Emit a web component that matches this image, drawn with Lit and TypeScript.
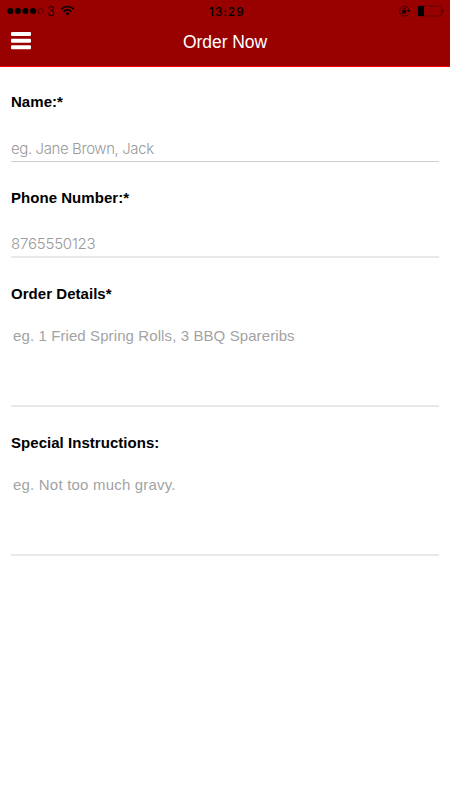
import { LitElement, html, css } from "lit";
import { customElement } from "lit/decorators.js";

@customElement("app-root")
export class AppRoot extends LitElement {
  static styles = css`
    :host { display: block; height: 800px; background: #fff; overflow: hidden; color: #000; font-family: "Liberation Sans", Arial, sans-serif; }
    header { height: 66px; background: #990000; border-bottom: 1px solid #fe0000; }
    .status { height: 22px; display: grid; grid-template-columns: 1fr auto 1fr; }
    .status svg { display: block; }
    .carrier { display: flex; }
    .three { font: 300 12.5px/23px "Inter", sans-serif; width: 13px; padding-left: 1px; }
    .time { font: 500 12px/23px "Inter", sans-serif; letter-spacing: 0.9px; width: 36px; padding-left: 4px; white-space: nowrap; }
    .right { display: flex; justify-content: flex-end; }
    .bar { height: 44px; display: grid; grid-template-columns: 1fr auto 1fr; }
    .menu { width: 20px; margin: 10px 0 0 11px; }
    .title { font-size: 17.5px; line-height: 40px; color: #fff; letter-spacing: -0.05px; }
    form { padding: 0 11px; }
    .field { display: flex; flex-direction: column; white-space: nowrap; box-sizing: border-box; border-bottom: 1px solid #cdcdcd; }
    .soft { border-bottom: 2px solid #e8e8e8; }
    label { font-weight: 700; font-size: 15px; line-height: 20px; padding-top: 26px; letter-spacing: 0.04px; }
    .f1 label { padding-top: 25px; }
    .input { font: 300 15px/20px "Inter", sans-serif; color: #9a9a9a; padding-top: 26px; }
    .f1 .input { padding-top: 27px; }
    .area { font-size: 15px; line-height: 20px; color: #a3a3a3; padding: 22px 0 0 2px; letter-spacing: 0.1px; }
    .f1 { height: 95px; } .f2 { height: 96px; } .f3 { height: 149px; } .f4 { height: 149px; }
    .f4 .area { letter-spacing: 0.2px; }
    .t1 { letter-spacing: -0.4px; } .t2 { letter-spacing: -0.2px; }
  `;

  render() {
    return html`
      <header>
        <div class="status">
          <div class="carrier">
            <svg width="46" height="22"><g fill="#000"><circle cx="10.3" cy="11" r="3"/><circle cx="17.9" cy="11" r="3"/><circle cx="25.4" cy="11" r="3"/><circle cx="33" cy="11" r="3"/></g><circle cx="40.7" cy="11" r="2.6" fill="none" stroke="#250000" stroke-width=".6"/></svg>
            <span class="three">3</span>
            <svg width="16" height="22" fill="none" stroke="#000" stroke-width="1.6"><path d="M1.3 9.1Q7.5 3.9 13.7 9.1M3.7 11.6Q7.5 8.3 11.3 11.6"/><path d="M5.4 13.4Q7.5 11.8 9.6 13.4L7.5 15.5Z" fill="#000" stroke="none"/></svg>
          </div>
          <span class="time">13:29</span>
          <div class="right">
            <svg width="54" height="22"><g fill="none" stroke="#300000"><path stroke-width=".9" d="M12.2 14.4A4.9 4.9 0 1 1 12.9 9"/><path d="M6.9 10.5V9.6a1.3 1.3 0 0 1 2.6 0v.9"/></g><path d="M6.3 10.2h3.8v3.4H6.3zM11 10h3.8l-1.8 2.4z" fill="#100000"/><rect x="22" y="6" width="23.5" height="10" rx="1.5" fill="none" stroke="#680000"/><path d="M22 6h6v10h-6z" fill="#000"/><path d="M46.5 9.7q1.5 1.5 0 3.4z" fill="#300000" stroke="#500000"/></svg>
          </div>
        </div>
        <div class="bar">
          <svg class="menu" width="20" height="18" fill="#fff"><rect y="0" width="20" height="4" rx="1"/><rect y="6.7" width="20" height="4" rx="1"/><rect y="13.3" width="20" height="4" rx="1"/></svg>
          <span class="title">Order Now</span><span></span>
        </div>
      </header>
      <form>
        <div class="field f1"><label>Name:*</label><span class="input t1">eg. Jane Brown, Jack</span></div>
        <div class="field f2 soft"><label>Phone Number:*</label><span class="input t2">8765550123</span></div>
        <div class="field f3 soft"><label>Order Details*</label><span class="area">eg. 1 Fried Spring Rolls, 3 BBQ Spareribs</span></div>
        <div class="field f4 soft"><label>Special Instructions:</label><span class="area">eg. Not too much gravy.</span></div>
      </form>`;
  }
}
